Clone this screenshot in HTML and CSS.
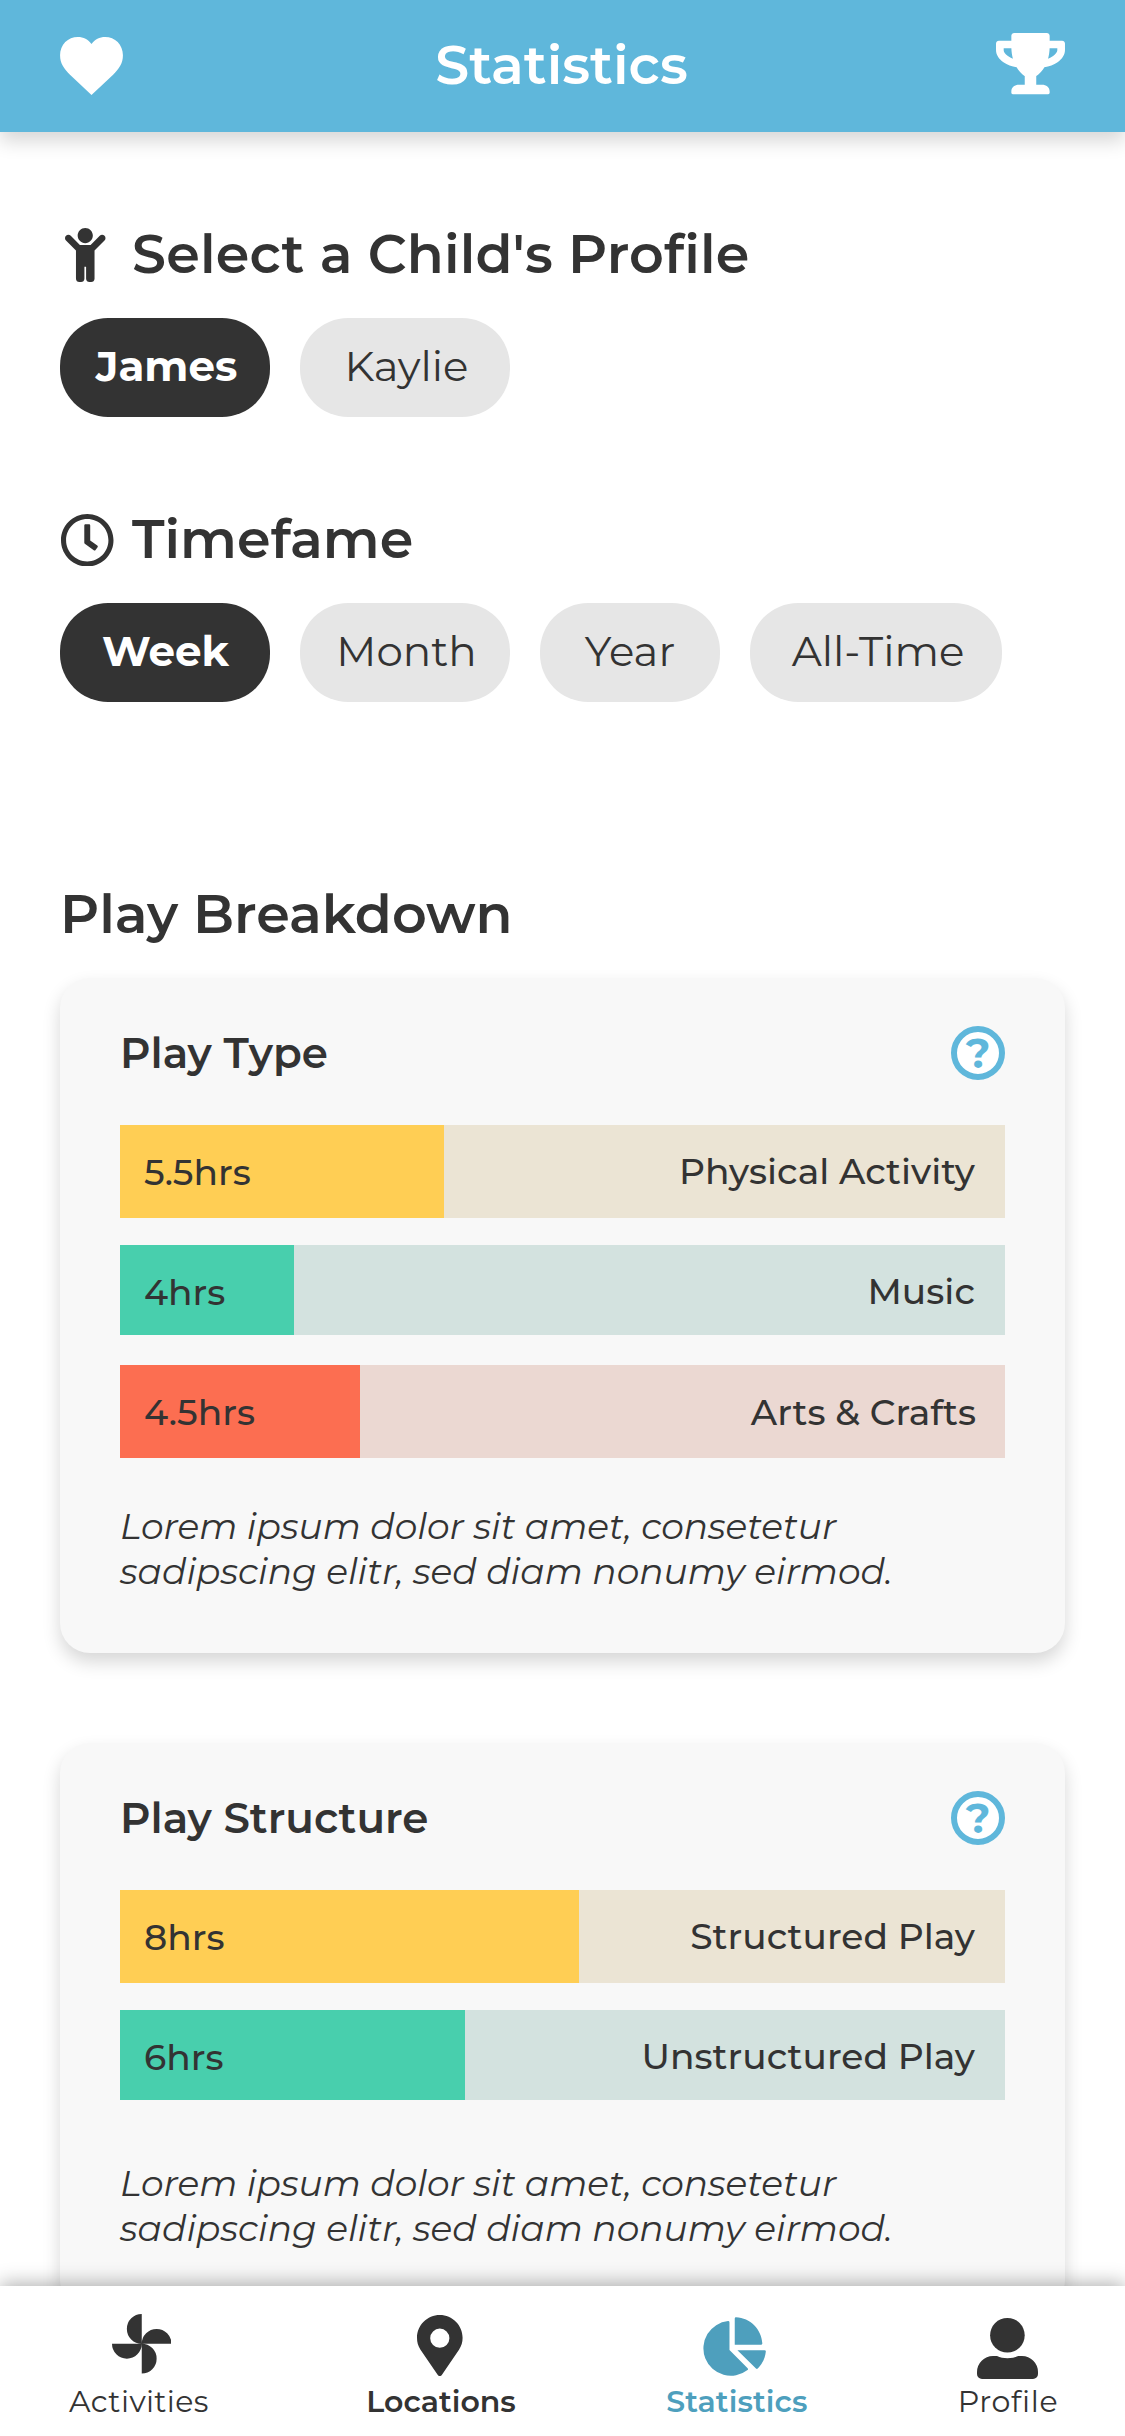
FILE: index.html
```html
<!DOCTYPE html>
<html lang="en">
<head>
<meta charset="utf-8">
<title>Statistics</title>
<link rel="stylesheet" href="styles.css">
</head>
<body>
<div class="app">
  <header class="topbar">
    <svg class="icon-heart" viewBox="0 0 63.4 58.5"><path d="M31.7 7C28.5 2.6 23.5 0 18 0 8 0 0 7.600 0 18.500 0 27 4 32 10 38L31.700 58.500 53.500 38C59.500 32 63.400 27 63.400 18.500 63.400 7.600 55.400 0 45.400 0 39.900 0 34.900 2.600 31.700 7Z"/></svg>
    <h1 class="topbar-title">Statistics</h1>
    <svg class="icon-trophy" viewBox="0 0 576 512"><path d="M552 64H448V24c0-13.300-10.700-24-24-24H152c-13.300 0-24 10.700-24 24v40H24C10.700 64 0 74.700 0 88v56c0 35.700 22.500 72.400 61.900 100.700 31.500 22.700 69.800 37.100 110 41.700C203.300 338.500 240 360 240 360v72h-48c-35.300 0-64 20.700-64 56v12c0 6.600 5.400 12 12 12h296c6.600 0 12-5.400 12-12v-12c0-35.300-28.700-56-64-56h-48v-72s36.700-21.500 68.100-73.600c40.300-4.600 78.600-19 110-41.700 39.300-28.300 61.900-65 61.900-100.700V88c0-13.300-10.700-24-24-24zM99.300 192.800C74.900 175.200 64 155.600 64 144v-16h64.200c1 32.600 5.800 61.200 12.800 86.200-15.100-5.200-29.200-12.400-41.700-21.400zM512 144c0 16.100-17.700 36.100-35.300 48.800-12.500 9-26.700 16.200-41.800 21.400 7-25 11.800-53.600 12.800-86.200H512v16z"/></svg>
  </header>

  <main class="content">
    <section class="filter">
      <h2 class="heading">
        <span class="heading-icon"><svg class="icon-child" viewBox="0 0 384 512"><path d="M120 72c0-39.765 32.235-72 72-72s72 32.235 72 72c0 39.764-32.235 72-72 72s-72-32.236-72-72zm254.627 1.373c-12.496-12.497-32.758-12.497-45.254 0L242.745 160H141.254L54.627 73.373c-12.496-12.497-32.758-12.497-45.254 0-12.497 12.497-12.497 32.758 0 45.255L104 213.254V480c0 17.673 14.327 32 32 32h16c17.673 0 32-14.327 32-32V368h16v112c0 17.673 14.327 32 32 32h16c17.673 0 32-14.327 32-32V213.254l94.627-94.627c12.497-12.497 12.497-32.757 0-45.254z"/></svg></span>
        <span class="heading-wide">Select a Child's Profile</span>
      </h2>
      <div class="pills">
        <button class="pill active">James</button>
        <button class="pill">Kaylie</button>
      </div>
    </section>

    <section class="filter">
      <h2 class="heading">
        <span class="heading-icon"><svg class="icon-clock" viewBox="8 8 496 496"><path d="M256 8C119 8 8 119 8 256s111 248 248 248 248-111 248-248S393 8 256 8zm0 448c-110.500 0-200-89.500-200-200S145.500 56 256 56s200 89.500 200 200-89.500 200-200 200zm61.800-104.400l-84.900-61.700c-3.100-2.300-4.900-5.900-4.900-9.700V116c0-6.600 5.400-12 12-12h32c6.600 0 12 5.400 12 12v141.700l66.800 48.600c5.400 3.900 6.500 11.400 2.600 16.800L334.600 349c-3.900 5.300-11.400 6.500-16.800 2.600z"/></svg></span>
        <span>Timefame</span>
      </h2>
      <div class="pills">
        <button class="pill active pill-week">Week</button>
        <button class="pill">Month</button>
        <button class="pill pill-short">Year</button>
        <button class="pill pill-long">All-Time</button>
      </div>
    </section>

    <section class="breakdown">
      <h2 class="heading">Play Breakdown</h2>

      <article class="card">
        <div class="card-head">
          <h3 class="card-title">Play Type</h3>
          <span class="help">?</span>
        </div>
        <div class="bars">
          <div class="bar yellow"><span class="fill" style="width:324px">5.5hrs</span><span class="label">Physical Activity</span></div>
          <div class="bar green"><span class="fill" style="width:174px">4hrs</span><span class="label">Music</span></div>
          <div class="bar red"><span class="fill" style="width:240px">4.5hrs</span><span class="label">Arts &amp; Crafts</span></div>
        </div>
        <p class="note">Lorem ipsum dolor sit amet, consetetur<br>sadipscing elitr, sed diam nonumy eirmod.</p>
      </article>

      <article class="card card-two">
        <div class="card-head">
          <h3 class="card-title">Play Structure</h3>
          <span class="help">?</span>
        </div>
        <div class="bars">
          <div class="bar yellow"><span class="fill" style="width:459px">8hrs</span><span class="label">Structured Play</span></div>
          <div class="bar green"><span class="fill" style="width:345px">6hrs</span><span class="label">Unstructured Play</span></div>
        </div>
        <p class="note">Lorem ipsum dolor sit amet, consetetur<br>sadipscing elitr, sed diam nonumy eirmod.</p>
      </article>
    </section>
  </main>

  <nav class="tabs">
    <a class="tab tab-activities">
      <svg class="icon-fan" viewBox="0 0 60 60"><path d="M30 0A15 15 0 0 0 30 30ZM30 30A15 15 0 0 1 60 30ZM30 30A15 15 0 0 1 30 60ZM0 30A15 15 0 0 0 30 30Z"/></svg>
      <span>Activities</span>
    </a>
    <a class="tab tab-locations">
      <svg class="icon-pin" viewBox="0 0 45.6 61"><path fill-rule="evenodd" d="M22.800 0C10.200 0 0 10.200 0 22.800c0 4.600 1 8 3.500 12L20.800 60c1 1.400 3 1.400 4 0L42 34.800c2.500-4 3.600-7.400 3.600-12C45.600 10.200 35.400 0 22.800 0ZM22.800 13.600a9.600 9.600 0 1 1 0 19.200 9.600 9.600 0 0 1 0-19.200Z"/></svg>
      <span>Locations</span>
    </a>
    <a class="tab tab-statistics">
      <svg class="icon-pie" viewBox="0 0 63.500 59"><path d="M25.300 3.900Q26.700 3.900 26.700 5.300V33L45 51.500Q45.800 52.400 44.900 53.200A27.600 27.600 0 1 1 25.300 3.900ZM33.200 0C47.700 .6 59 12 59.800 26.400Q59.800 27.800 58.400 27.800H32V1.200Q32 0 33.200 0ZM34.700 33.300H62Q63.500 33.300 63.300 34.700C62.600 41 60 47 55.200 51.700Q54.300 52.500 53.400 51.700Z"/></svg>
      <span>Statistics</span>
    </a>
    <a class="tab tab-profile">
      <svg class="icon-user" viewBox="0 0 61 61"><circle cx="30.400" cy="17.300" r="17.300"/><path d="M16 38H20C26 40.900 35 40.900 41 38H45A16 16 0 0 1 61 54V56A5 5 0 0 1 56 61H5A5 5 0 0 1 0 56V54A16 16 0 0 1 16 38Z"/></svg>
      <span>Profile</span>
    </a>
  </nav>
</div>
</body>
</html>
```
FILE: styles.css
```css
* { box-sizing: border-box; }

body {
  margin: 0;
  background: #fff;
  color: #333;
  font-family: Montserrat, "Open Sans", sans-serif;
}

h1, h2, h3, p { margin: 0; }
svg { display: block; fill: currentColor; flex: none; }

.app {
  display: flex;
  flex-direction: column;
  width: 1125px;
  height: 2436px;
  overflow: hidden;
}

.topbar {
  position: relative;
  z-index: 1;
  flex: none;
  display: flex;
  align-items: center;
  justify-content: space-between;
  height: 132px;
  padding: 0 60px;
  background: #5fb7db;
  color: #fff;
  box-shadow: 0 9px 18px rgba(0, 0, 0, .16);
}
.topbar-title {
  margin: -2px 0 0 4px;
  font-size: 54px;
  line-height: 66px;
  font-weight: 600;
}
.icon-heart { width: 63px; height: 58px; }
.icon-trophy { width: 69px; height: 61.3px; margin-top: -4px; }

.content {
  flex: 1;
  min-height: 0;
  padding: 89px 60px 0;
}

.heading {
  display: flex;
  margin-bottom: 31px;
  font-size: 54px;
  line-height: 66px;
  font-weight: 600;
  font-variant-ligatures: none;
}
.heading-wide { letter-spacing: .2px; }
.heading-icon {
  display: flex;
  align-items: center;
  width: 72px;
  padding-top: 2px;
}
.icon-child { width: 40.5px; height: 54px; margin-left: 5.3px; }
.icon-clock { width: 52.5px; height: 52.5px; margin-left: 1.2px; }

.filter { margin-bottom: 89px; }
.pills { display: flex; gap: 30px; }
.pill {
  width: 210px;
  height: 99px;
  padding: 22px 0 25px 3px;
  border: 0;
  border-radius: 48px;
  background: #e6e6e6;
  color: inherit;
  font: 400 42px/52px Montserrat, "Open Sans", sans-serif;
  text-align: center;
}
.pill.active { background: #333; color: #fff; font-weight: 700; }
.pill-week { padding-left: 1px; }
.pill-short { width: 180px; padding-left: 0; }
.pill-long { width: 252px; padding-left: 4px; }

.breakdown { padding-top: 90px; }

.card {
  padding: 48px 60px 60px;
  border-radius: 30px;
  background: #f8f8f8;
  box-shadow: 0 9px 18px rgba(0, 0, 0, .16);
}
.card + .card { margin-top: 90px; }
.card-head {
  display: flex;
  align-items: center;
  justify-content: space-between;
  height: 54px;
  margin-bottom: 45px;
}
.card-title { font-size: 42px; line-height: 52px; font-weight: 600; }
.help {
  display: flex;
  align-items: center;
  justify-content: center;
  width: 54px;
  height: 54px;
  border: 6px solid #5fb7db;
  border-radius: 50%;
  background: #fff;
  color: #5fb7db;
  font-size: 42px;
  line-height: 52px;
  font-weight: 700;
}

.bars { display: grid; grid-auto-rows: 120px; align-items: start; }
.bar {
  display: flex;
  justify-content: space-between;
  height: 93px;
  font-size: 36px;
  line-height: 44px;
  font-weight: 500;
}
.fill { height: 100%; padding: 25px 0 0 24px; }
.label { padding: 24px 30px 0 0; letter-spacing: .04px; }
.yellow { background: #ebe4d4; }
.yellow .fill { background: #ffce54; }
.green { height: 90px; background: #d3e2df; }
.green .fill { background: #48cfad; }
.red { background: #ebd8d2; }
.red .fill { background: #fc6e51; }
.red .label { padding: 25px 29px 0 0; }

.note {
  height: 90px;
  margin-top: 18px;
  padding-top: 1px;
  font-size: 36px;
  line-height: 45px;
  font-style: italic;
  font-weight: 400;
  white-space: nowrap;
}
.card-two .note { margin-top: 30px; }

.tabs {
  position: relative;
  z-index: 1;
  flex: none;
  display: flex;
  gap: 152px;
  height: 150px;
  padding: 0 69px 16px;
  background: #fff;
  box-shadow: 0 -3px 18px rgba(0, 0, 0, .3);
}
.tab {
  flex: none;
  display: flex;
  flex-direction: column;
  align-items: center;
  justify-content: flex-end;
  font-size: 30px;
  line-height: 37px;
  font-variant-ligatures: none;
}
.tab-activities { width: 140px; margin-right: 6px; letter-spacing: .4px; }
.tab-locations { width: 148px; font-weight: 600; }
.tab-statistics { width: 140px; color: #4e9fbd; font-weight: 600; letter-spacing: .1px; }
.tab-profile { width: 98px; letter-spacing: .7px; }
.icon-fan { width: 59.5px; height: 59.5px; margin: 0 0 9.500px 5px; }
.icon-pin { width: 45.6px; height: 61px; margin: 0 2px 7px 0; }
.icon-pie { width: 63px; height: 59px; margin: 0 5px 7px 0; }
.icon-user { width: 61px; height: 61px; margin: 0 1px 4px 0; }
```
